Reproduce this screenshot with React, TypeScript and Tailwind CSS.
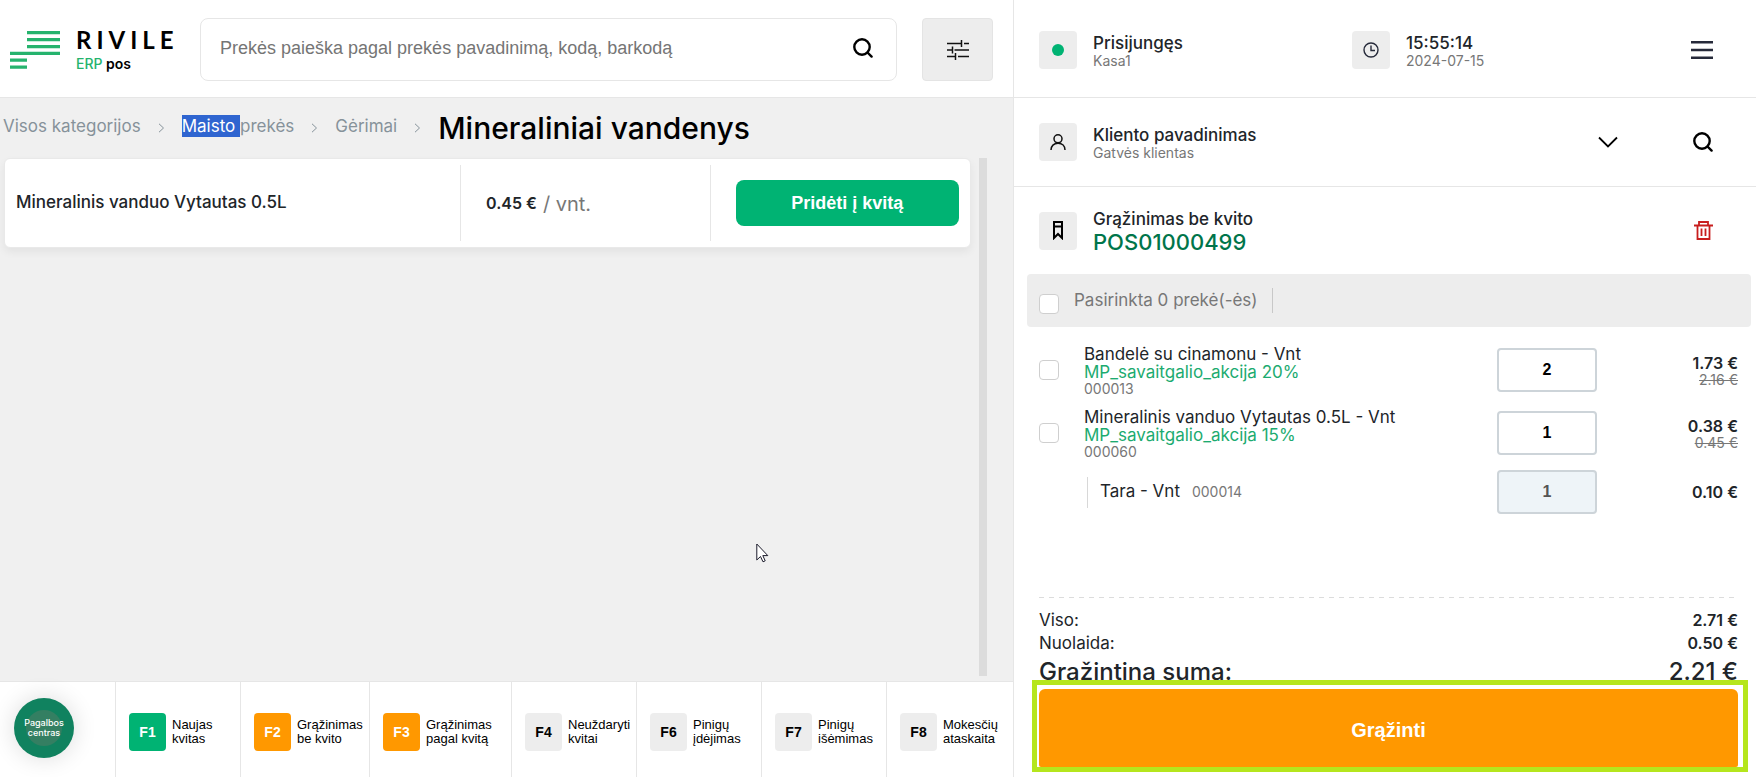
import type { ReactNode } from "react";

interface Shortcut {
  code: string;
  lines: [string, string];
  tone: string;
  width: string;
}

interface ReceiptItem {
  id: string;
  name: string;
  promo: string;
  qty: number;
  price: string;
  oldPrice: string;
}

const shortcuts: Shortcut[] = [
  { code: "F1", lines: ["Naujas", "kvitas"], tone: "bg-[#00b373] text-white", width: "w-[125px]" },
  { code: "F2", lines: ["Grąžinimas", "be kvito"], tone: "bg-[#ff9800] text-white", width: "w-[129px]" },
  { code: "F3", lines: ["Grąžinimas", "pagal kvitą"], tone: "bg-[#ff9800] text-white", width: "w-[142px]" },
  { code: "F4", lines: ["Neuždaryti", "kvitai"], tone: "bg-[#ededed] text-black", width: "w-[125px]" },
  { code: "F6", lines: ["Pinigų", "įdėjimas"], tone: "bg-[#ededed] text-black", width: "w-[125px]" },
  { code: "F7", lines: ["Pinigų", "išėmimas"], tone: "bg-[#ededed] text-black", width: "w-[125px]" },
  { code: "F8", lines: ["Mokesčių", "ataskaita"], tone: "bg-[#ededed] text-black", width: "flex-1" },
];

const items: ReceiptItem[] = [
  { id: "000013", name: "Bandelė su cinamonu - Vnt", promo: "MP_savaitgalio_akcija 20%", qty: 2, price: "1.73 €", oldPrice: "2.16 €" },
  { id: "000060", name: "Mineralinis vanduo Vytautas 0.5L - Vnt", promo: "MP_savaitgalio_akcija 15%", qty: 1, price: "0.38 €", oldPrice: "0.45 €" },
];

const arial = "font-['Liberation_Sans',Arial,sans-serif]";
const checkbox =
  "size-5 shrink-0 appearance-none rounded border border-[#cfcfcf] bg-white checked:bg-[#00b373]";
const qtyInput =
  "h-11 w-[100px] rounded border-2 border-[#cdd4d9] bg-white text-center text-base font-bold text-black disabled:bg-[#eef4f8] disabled:text-[#555]";

function SearchIcon() {
  return (
    <svg width="20" height="20" viewBox="0 0 20 20" fill="none" stroke="#000" strokeWidth="2.400">
      <circle cx="9" cy="9" r="7.700" />
      <path d="M14.500 14.500 18.600 18.600" strokeLinecap="round" />
    </svg>
  );
}

function Crumb({ children }: { children: ReactNode }) {
  return (
    <>
      <a href="#" className="text-[#86929a]">{children}</a>
      <svg className="mt-1" width="7" height="10" viewBox="0 0 7 10" fill="none" stroke="#86929a">
        <path d="M1 .8 5.500 5 1 9.200" />
      </svg>
    </>
  );
}

function IconBox({ children }: { children: ReactNode }) {
  return <div className="flex size-[38px] shrink-0 items-center justify-center rounded bg-[#ededed]">{children}</div>;
}

function Labeled({ icon, title, sub }: { icon: ReactNode; title: string; sub: string }) {
  return (
    <div className="flex items-center gap-4">
      <IconBox>{icon}</IconBox>
      <div className="pt-1">
        <div className="text-[17px] leading-[18px] font-medium">{title}</div>
        <div className="text-sm leading-[18px] text-[#777]">{sub}</div>
      </div>
    </div>
  );
}

function Logo() {
  return (
    <div className="flex w-[200px] shrink-0 gap-4 pl-[10px]">
      <svg className="mt-[13px]" width="50" height="38" viewBox="0 0 50 38" fill="#25b36d">
        <path d="M17 0h33v3.200H17zM17 7h33v3.200H17zM17 14h33v3.200H17zM0 20.800h50V24H0zM0 27.600h17v3.200H0zM0 34.600h17v3.200H0z" />
      </svg>
      <div className="pt-[10px]">
        <div className="font-[Lato,sans-serif] text-2xl leading-6 font-bold tracking-[5px] text-black">RIVILE</div>
        <div className="text-sm leading-6 font-semibold text-black">
          <span className="font-medium text-[#25b36d]">ERP</span> pos
        </div>
      </div>
    </div>
  );
}

function Catalog() {
  return (
    <section className="flex min-w-0 flex-col border-r border-[#e6e6e6] bg-[#f0f0f0]">
      <header className="flex h-[98px] border-b border-[#e6e6e6] bg-white pt-[18px] pr-5">
        <Logo />
        <label className="flex h-[63px] flex-1 items-center rounded-lg border border-[#e6e6e6] pr-[23px] pb-[3px] pl-[19px]">
          <input
            type="text"
            aria-label="Prekės paieška"
            placeholder="Prekės paieška pagal prekės pavadinimą, kodą, barkodą"
            className={`${arial} min-w-0 flex-1 text-lg outline-none placeholder:text-[#757575]`}
          />
          <SearchIcon />
        </label>
        <button aria-label="Filtrai" className="ml-[25px] flex h-[63px] w-[71px] items-center justify-center rounded border border-[#e4e4e4] bg-[#ededed]">
          <svg width="22" height="20" viewBox="0 0 22 20" fill="none" stroke="#111" strokeWidth="1.500">
            <path d="M0 3.500h14.500M17 3.500h5M14.500 0v7M0 10h5M7.500 10H22M5.500 6.500v7M0 16.500h8.500M11 16.500h11M8.500 13v7" />
          </svg>
        </button>
      </header>

      <nav className="flex h-[60px] items-center gap-[17px] pb-1 pl-[3px] text-[17px] leading-[23px]">
        <Crumb>Visos kategorijos</Crumb>
        <Crumb>
          <span className="bg-[#2f65d0] py-px text-white">Maisto </span>prekės
        </Crumb>
        <Crumb>Gėrimai</Crumb>
        <h1 className="pt-1 text-[30px] leading-9 font-medium text-black">Mineraliniai vandenys</h1>
      </nav>

      <div className="flex flex-1 items-stretch gap-2 pr-[26px] pb-[5px] pl-1">
        <div className="flex-1">
          <article className="grid h-[90px] grid-cols-[456fr_251fr_260fr] rounded-md border border-[#e9e9e9] bg-white py-1.5 shadow-[0_4px_8px_rgba(0,0,0,0.06)]">
            <div className="flex items-center pl-[11px] text-[17px] font-medium">Mineralinis vanduo Vytautas 0.5L</div>
            <div className="flex items-center gap-1.5 border-x border-[#e6e6e6] pl-[25px]">
              <span className="text-base font-semibold">0.45 €</span>
              <span className="pt-0.5 text-xl text-[#777]">/ vnt.</span>
            </div>
            <div className="flex items-center pr-[11px] pl-[25px]">
              <button className={`${arial} h-[46px] flex-1 rounded-lg bg-[#00b373] text-lg font-bold text-white`}>
                Pridėti į kvitą
              </button>
            </div>
          </article>
        </div>
        <div className="w-2 bg-[#dcdcdc]" />
      </div>

      <footer className="flex h-24 border-t border-[#e6e6e6] bg-white">
        <div className="w-[115px] shrink-0 pt-4 pl-[14px]">
          <button className="flex size-[60px] items-center justify-center rounded-full bg-[#10825f] shadow-[0_0_24px_rgba(0,0,0,0.14)]">
            <span className="flex size-9 items-center justify-center rounded-full bg-[#347f62] text-[9px] leading-[10px] font-medium text-white">
              Pagalbos centras
            </span>
          </button>
        </div>
        {shortcuts.map((s) => (
          <button key={s.code} className={`${arial} ${s.width} flex items-center gap-1.5 border-l border-[#e6e6e6] pt-1 pl-[13px] text-left`}>
            <span className={`${s.tone} flex h-[38px] w-[37px] shrink-0 items-center justify-center rounded text-sm font-bold`}>{s.code}</span>
            <span className="text-[13px] leading-[14px] text-black">
              {s.lines[0]}
              <br />
              {s.lines[1]}
            </span>
          </button>
        ))}
      </footer>
    </section>
  );
}

function Receipt() {
  return (
    <section className="flex min-w-0 flex-col bg-white pb-[5px]">
      <header className="flex h-[98px] items-center border-b border-[#e6e6e6] pt-[3px] pr-[43px] pl-[25px]">
        <div className="w-[313px]">
          <Labeled icon={<span className="size-3 rounded-full bg-[#00b373]" />} title="Prisijungęs" sub="Kasa1" />
        </div>
        <Labeled
          icon={
            <svg width="16" height="16" viewBox="0 0 16 16" fill="none" stroke="#262a3a" strokeWidth="1.400">
              <circle cx="8" cy="8" r="7" />
              <path d="M8 3.500V8.500h4" />
            </svg>
          }
          title="15:55:14"
          sub="2024-07-15"
        />
        <button aria-label="Meniu" className="ml-auto">
          <svg width="22" height="18" viewBox="0 0 22 18" fill="#262a3a">
            <path d="M0 0h22v2.400H0zM0 7.800h22v2.400H0zM0 15.600h22V18H0z" />
          </svg>
        </button>
      </header>

      <div className="flex h-[89px] items-center border-b border-[#e6e6e6] pr-[43px] pl-[25px]">
        <Labeled
          icon={
            <svg width="16" height="16" viewBox="0 0 16 16" fill="none" stroke="#111" strokeWidth="1.500">
              <circle cx="8" cy="4.800" r="4" />
              <path d="M1 16c0-4 2.800-6.800 7-6.800S15 12 15 16" />
            </svg>
          }
          title="Kliento pavadinimas"
          sub="Gatvės klientas"
        />
        <button aria-label="Pasirinkti klientą" className="mr-[75px] ml-auto">
          <svg width="20" height="12" viewBox="0 0 20 12" fill="none" stroke="#000" strokeWidth="1.800">
            <path d="M1 1.500 10 10.500 19 1.500" />
          </svg>
        </button>
        <button aria-label="Ieškoti kliento">
          <SearchIcon />
        </button>
      </div>

      <div className="flex h-[87px] items-center gap-4 pr-[43px] pl-[25px]">
        <IconBox>
          <svg width="10" height="19" viewBox="0 0 10 19" fill="none" stroke="#000" strokeWidth="2">
            <path d="M1 1h8v16L5 13l-4 4zM1 5.500h8" />
          </svg>
        </IconBox>
        <div className="pt-0.5">
          <div className="text-[17px] leading-5 font-medium">Grąžinimas be kvito</div>
          <div className="text-[22px] leading-[26px] font-medium text-[#00754b]">POS01000499</div>
        </div>
        <button aria-label="Ištrinti" className="ml-auto">
          <svg width="19" height="19" viewBox="0 0 19 19" fill="none" stroke="#c81e1e" strokeWidth="1.800">
            <path d="M0 4.500h19M5 4V1h9v3M3.500 5v13h12V5M7.500 7.500v7.500M11.500 7.500v7.500" />
          </svg>
        </button>
      </div>

      <div className="mr-[5px] ml-[13px] flex h-[53px] items-center rounded bg-[#ededed] pl-3">
        <input id="all" type="checkbox" className={`${checkbox} mt-1.5`} />
        <label htmlFor="all" className="ml-[15px] border-r border-[#c8c8c8] pr-[14px] text-[17px] leading-[25px] text-[#777]">
          Pasirinkta 0 prekė(-ės)
        </label>
      </div>

      <ul className="mt-[11px] pr-[18px] pl-[25px]">
        {items.map((item) => (
          <li key={item.id} className="flex h-[63px] items-center">
            <input id={item.id} type="checkbox" className={checkbox} />
            <label htmlFor={item.id} className="ml-[25px] flex-1 pt-0.5 text-[17px] leading-[18px]">
              <span className="block">{item.name}</span>
              <span className="block text-[#1cab70]">{item.promo}</span>
              <span className="block text-sm leading-4 text-[#777]">{item.id}</span>
            </label>
            <input type="text" aria-label="Kiekis" defaultValue={item.qty} className={`${arial} ${qtyInput}`} />
            <div className="w-[141px] pt-0.5 text-right">
              <div className="text-base leading-[18px] font-semibold">{item.price}</div>
              <div className="text-sm leading-4 text-[#777] line-through">{item.oldPrice}</div>
            </div>
          </li>
        ))}
        <li className="flex h-14 items-center pl-12">
          <div className="flex h-[31px] items-center gap-3 border-l border-[#d8d8d8] pl-3">
            <span className="text-[17px]">Tara - Vnt</span>
            <span className="text-sm text-[#777]">000014</span>
          </div>
          <input type="text" aria-label="Taros kiekis" defaultValue={1} disabled className={`${arial} ${qtyInput} ml-auto`} />
          <div className="w-[141px] text-right text-base font-semibold">0.10 €</div>
        </li>
      </ul>

      <div className="mt-auto pr-[18px] pl-[25px]">
        <div className="h-px bg-[repeating-linear-gradient(90deg,#dcdcdc_0_5px,transparent_5px_10px)]" />
        <dl className="mt-[11px]">
          <div className="flex justify-between leading-[23px]">
            <dt className="text-[17px]">Viso:</dt>
            <dd className="font-semibold">2.71 €</dd>
          </div>
          <div className="flex justify-between leading-[23px]">
            <dt className="text-[17px]">Nuolaida:</dt>
            <dd className="font-semibold">0.50 €</dd>
          </div>
          <div className="flex h-[25px] justify-between text-2xl leading-[34px] font-medium">
            <dt>Grąžintina suma:</dt>
            <dd>2.21 €</dd>
          </div>
        </dl>
        {/* the pay frame sits over the descenders of the sum row */}
        <div className="relative -mr-[10px] -ml-[7px] border-[5px] border-[#b5e61d] bg-white pt-1 pr-[5px] pl-[2px]">
          <button className={`${arial} h-[78px] w-full rounded-t-md rounded-b-xs bg-[#ff9800] pt-1 text-xl font-bold text-white`}>
            Grąžinti
          </button>
        </div>
      </div>
    </section>
  );
}

export default function App() {
  return (
    <div className="relative grid min-h-screen grid-cols-[1014fr_742fr] bg-white font-[Inter,sans-serif] text-[#212529]">
      <Catalog />
      <Receipt />
      <svg className="pointer-events-none absolute top-[543px] left-[756px]" width="13" height="20" viewBox="0 0 13 20" fill="#fff" stroke="#1b1b2b">
        <path d="M.8 1v16l3.700-3.500 2.500 5.300 2.200-1-2.400-5.200h5z" />
      </svg>
    </div>
  );
}
